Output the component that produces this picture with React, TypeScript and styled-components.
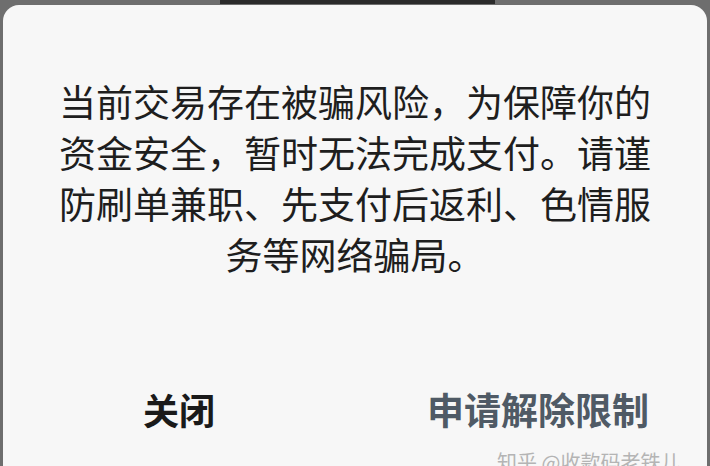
import styled, { createGlobalStyle } from "styled-components";

const GlobalStyle = createGlobalStyle`
  html, body {
    margin: 0;
    padding: 0;
    background: #6e6e6e;
  }
  body {
    font-family: "Noto Sans CJK SC", "Noto Sans", sans-serif;
  }
`;

const App = () => {
  return (
    <Screen>
      <GlobalStyle />
      <StatusStrip>
        <Notch />
      </StatusStrip>
      <Dialog>
        <Message>
          当前交易存在被骗风险，为保障你的资金安全，暂时无法完成支付。请谨防刷单兼职、先支付后返利、色情服务等网络骗局。
        </Message>
        <Actions>
          <ActionButton>关闭</ActionButton>
          <ActionButton $primary>申请解除限制</ActionButton>
        </Actions>
      </Dialog>
      <Watermark>知乎 @收款码老铁儿</Watermark>
    </Screen>
  );
};

const Screen = styled.div`
  position: relative;
  width: 710px;
  height: 466px;
  overflow: hidden;
  background: #6e6e6e;
  display: flex;
  flex-direction: column;
`;

const StatusStrip = styled.div`
  height: 5px;
  flex-shrink: 0;
  display: flex;
  padding-left: 220px;
`;

const Notch = styled.div`
  width: 275px;
  height: 4px;
  background: #2b2b2b;
`;

const Dialog = styled.div`
  flex-shrink: 0;
  height: 480px;
  margin: 0 3px;
  background: #f7f7f7;
  border-radius: 16px;
  padding-top: 71px;
  box-sizing: border-box;
`;

const Message = styled.p`
  width: 600px;
  margin: 0 auto;
  text-align: center;
  font-size: 37px;
  line-height: 51px;
  color: #1e1e1e;
  font-weight: 400;
`;

const Actions = styled.div`
  display: grid;
  grid-template-columns: 1fr 1fr;
  margin-top: 104px;
`;

const ActionButton = styled.button<{ $primary?: boolean }>`
  border: none;
  background: none;
  padding: 0 0 0 ${(p) => (p.$primary ? "14px" : "0")};
  font-family: "Noto Sans CJK SC", "Noto Sans", sans-serif;
  font-size: ${(p) => (p.$primary ? "37px" : "36px")};
  line-height: 50px;
  font-weight: 700;
  color: ${(p) => (p.$primary ? "#4f5a65" : "#1a1a1a")};
  text-align: center;
  cursor: pointer;
`;

const Watermark = styled.div`
  position: absolute;
  left: 497px;
  top: 449px;
  font-family: "Noto Sans CJK SC", "Noto Sans", sans-serif;
  font-size: 20px;
  line-height: 26px;
  color: #b4b4b4;
  white-space: nowrap;
`;

export default App;
